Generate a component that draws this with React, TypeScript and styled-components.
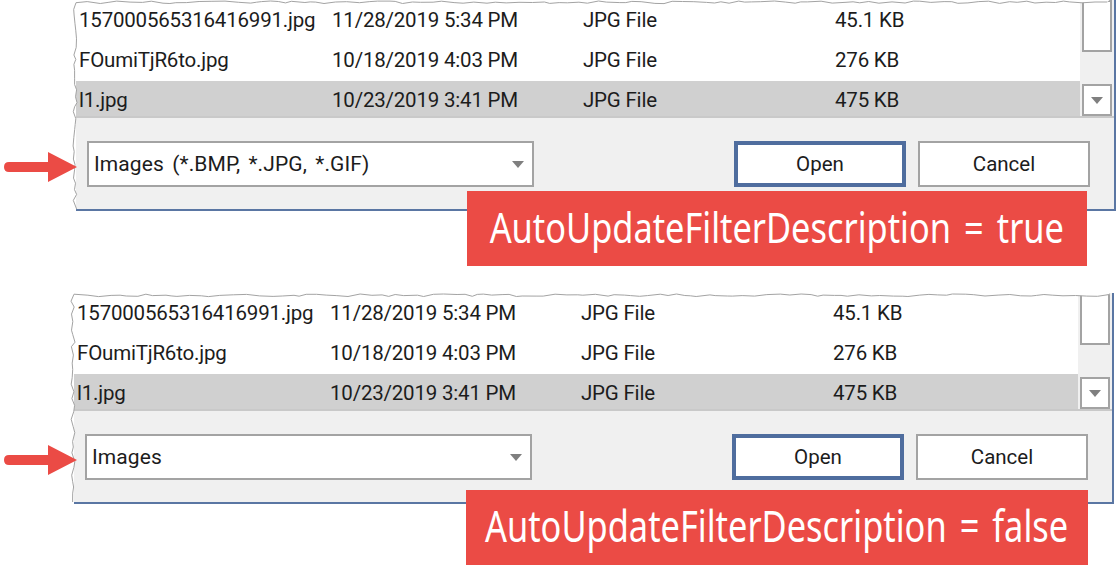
import * as React from 'react';
import styled, { createGlobalStyle } from 'styled-components';

const files = [
  { name: '157000565316416991.jpg', date: '11/28/2019 5:34 PM', type: 'JPG File', size: '45.1 KB' },
  { name: 'FOumiTjR6to.jpg', date: '10/18/2019 4:03 PM', type: 'JPG File', size: '276 KB' },
  { name: 'l1.jpg', date: '10/23/2019 3:41 PM', type: 'JPG File', size: '475 KB' }
];

// jagged "torn paper" edge of the cropped dialog
const tornEdge = (seed: number, width: number, height: number) => {
  let s = seed;
  const rnd = () => {
    s = (s * 9301 + 49297) % 233280;
    return s / 233280;
  };
  const pts: string[] = [];
  for (let y = height; y > 4; y -= 4 + rnd() * 5) {
    pts.push(`${(1 + rnd() * 4).toFixed(1)},${y.toFixed(1)}`);
  }
  for (let x = 4; x < width; x += 5 + rnd() * 9) {
    pts.push(`${x.toFixed(1)},${(1 + rnd() * 2.6).toFixed(1)}`);
  }
  return pts;
};

const Torn: React.FC<{ seed: number }> = ({ seed }) => {
  const pts = tornEdge(seed, 1040, 209);
  return (
    <TornSvg width="1040" height="211" viewBox="0 0 1040 211">
      <polygon points={`-2,211 ${pts.join(' ')} 1040,-2 -2,-2`} fill="#fff" />
      <polyline points={pts.join(' ')} fill="none" stroke="#a3a3a3" strokeWidth="1" />
    </TornSvg>
  );
};

const Arrow: React.FC<{ $second?: boolean }> = ({ $second }) => (
  <ArrowSvg $second={$second} width="73" height="30" viewBox="0 0 73 30">
    <path d="M44 0 L73 15 L44 30 L44 20 L5 20 Q0 20 0 15 Q0 10 5 10 L44 10 Z" fill="#eb4b45" />
  </ArrowSvg>
);

const Triangle = () => (
  <svg width="12" height="7" viewBox="0 0 12 7">
    <path d="M0 0 H12 L6 7 Z" fill="#7f7f7f" />
  </svg>
);

const Dialog: React.FC<{ seed: number; filter: string; value: string; second?: boolean }> = ({ seed, filter, value, second }) => (
  <Shot $second={second}>
    <Window>
      <List>
        <Rows>
          {files.map((f, i) => (
            <Row key={f.name} $selected={i === 2}>
              <span>{f.name}</span>
              <span>{f.date}</span>
              <span>{f.type}</span>
              <span>{f.size}</span>
            </Row>
          ))}
        </Rows>
        <Scroll>
          <Thumb />
          <ScrollButton><Triangle /></ScrollButton>
        </Scroll>
      </List>
      <Footer>
        <Select>
          {filter}
          <Triangle />
        </Select>
        <Buttons>
          <Button $primary>Open</Button>
          <Button>Cancel</Button>
        </Buttons>
      </Footer>
    </Window>
    <Torn seed={seed} />
    <Arrow $second={second} />
    <Label $second={second}>
      <LabelText $second={second}>AutoUpdateFilterDescription = {value}</LabelText>
    </Label>
  </Shot>
);

export default function App() {
  return (
    <Page>
      <GlobalStyle />
      <Dialog seed={17} filter="Images (*.BMP, *.JPG, *.GIF)" value="true" />
      <Dialog seed={431} filter="Images" value="false" second />
    </Page>
  );
}

const GlobalStyle = createGlobalStyle`
  html, body {
    margin: 0;
    background: #fff;
    overflow: hidden;
  }
`;

const Page = styled.div`
  display: flex;
  flex-direction: column;
  gap: 82px;
  width: 1116px;
  height: 582px;
  font-family: Roboto, "Noto Sans", sans-serif;
  color: #1c1c1c;
`;

const Shot = styled.div<{ $second?: boolean }>`
  position: relative;
  width: 1040px;
  margin-left: ${(p) => (p.$second ? '74px' : '76px')};
`;

const Window = styled.div`
  display: flex;
  flex-direction: column;
  height: 211px;
  background: #f0f0f0;
  border-right: 2px solid #5a76a3;
  border-bottom: 2px solid #5a76a3;
  box-sizing: border-box;
`;

const List = styled.div`
  display: flex;
  height: 118px;
  border-bottom: 2px solid #c9c9c9;
  box-sizing: border-box;
`;

const Rows = styled.div`
  flex: 1;
  height: 116px;
  box-sizing: border-box;
  background: #fff;
  overflow: hidden;
`;

const Row = styled.div<{ $selected?: boolean }>`
  display: grid;
  grid-template-columns: 253px 251px 252px 1fr;
  align-items: center;
  height: 40px;
  padding-left: 3px;
  font-size: 20.5px;
  letter-spacing: -0.2px;
  white-space: nowrap;
  background: ${(p) => (p.$selected ? '#d0d0d0' : '#fff')};
  &:last-child {
    height: 38px;
    margin-top: 1px;
  }
`;

const Scroll = styled.div`
  display: flex;
  flex-direction: column;
  justify-content: space-between;
  width: 34px;
  padding: 0 2px 0 2px;
  box-sizing: border-box;
`;

const Thumb = styled.div`
  height: 52px;
  background: #fff;
  border: 2px solid #a3a3a3;
  box-sizing: border-box;
`;

const ScrollButton = styled.div`
  display: flex;
  align-items: center;
  justify-content: center;
  height: 32px;
  background: #fff;
  border: 2px solid #a3a3a3;
  box-sizing: border-box;
`;

const Footer = styled.div`
  display: flex;
  justify-content: space-between;
  align-items: flex-start;
  padding: 23px 24px 0 11px;
`;

const Select = styled.div`
  display: flex;
  align-items: center;
  justify-content: space-between;
  width: 447px;
  height: 46px;
  padding: 0 8px 0 5px;
  background: #fff;
  border: 2px solid #a3a3a3;
  box-sizing: border-box;
  font-size: 21px;
  word-spacing: 3px;
  letter-spacing: 0.1px;
`;

const Buttons = styled.div`
  display: flex;
  gap: 12px;
`;

const Button = styled.div<{ $primary?: boolean }>`
  display: flex;
  align-items: center;
  justify-content: center;
  width: 172px;
  height: 46px;
  background: #fff;
  border: ${(p) => (p.$primary ? '4px solid #4f6d9e' : '2px solid #a3a3a3')};
  box-sizing: border-box;
  font-size: 20.5px;
`;

const TornSvg = styled.svg`
  position: absolute;
  left: -4px;
  top: 0;
  overflow: visible;
  pointer-events: none;
`;

const ArrowSvg = styled.svg<{ $second?: boolean }>`
  position: absolute;
  left: ${(p) => (p.$second ? '-70px' : '-72px')};
  top: 152px;
`;

const Label = styled.div<{ $second?: boolean }>`
  position: absolute;
  left: ${(p) => (p.$second ? '392px' : '391px')};
  top: ${(p) => (p.$second ? '197px' : '191px')};
  width: ${(p) => (p.$second ? '622px' : '620px')};
  height: 75px;
  display: flex;
  align-items: center;
  justify-content: center;
  background: #eb4b45;
  color: #fff;
  font-family: "Noto Sans", sans-serif;
  white-space: pre;
`;

const LabelText = styled.span<{ $second?: boolean }>`
  font-size: ${(p) => (p.$second ? '43px' : '41.5px')};
  font-variant-ligatures: none;
  word-spacing: 5px;
  transform: scaleX(${(p) => (p.$second ? 0.8 : 0.828)});
  margin-top: -4px;
`;
